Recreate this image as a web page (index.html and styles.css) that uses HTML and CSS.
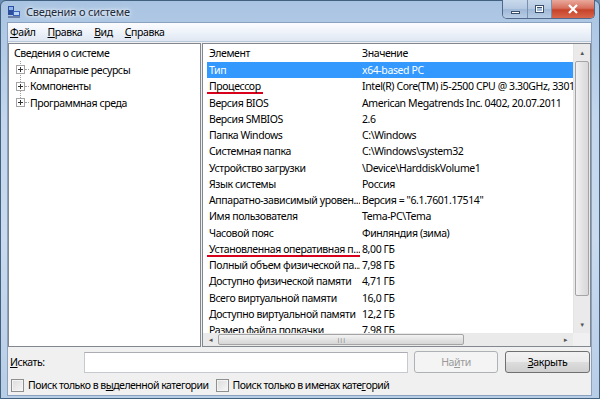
FILE: index.html
```html
<!DOCTYPE html>
<html lang="ru">
<head>
<meta charset="utf-8">
<link rel="stylesheet" href="styles.css">
</head>
<body>
<div class="window">
  <div class="titlebar">
    <svg class="appicon" width="14" height="14" viewBox="0 0 14 14">
      <rect x="1" y="1" width="6" height="9" fill="#2b4f9e"/>
      <rect x="2" y="2" width="4" height="3" fill="#8fb4ea"/>
      <rect x="6" y="6" width="7" height="6" fill="#3a62b8"/>
      <rect x="7" y="7" width="5" height="3" fill="#b9d2f5"/>
      <rect x="1" y="11" width="12" height="2" fill="#6b7fa6"/>
    </svg>
    <span class="title">Сведения о системе</span>
    <div class="capbtns">
      <div class="cap cap-min"><span class="minbar"></span></div>
      <div class="cap cap-max"><span class="maxbox"></span></div>
      <div class="cap cap-close">
        <svg width="12" height="10" viewBox="0 0 12 10"><path d="M2 1 L10 9 M10 1 L2 9" stroke="#fff" stroke-width="2.2"/></svg>
      </div>
    </div>
  </div>
  <div class="client">
    <div class="menubar">
      <span class="menu"><u>Ф</u>айл</span>
      <span class="menu"><u>П</u>равка</span>
      <span class="menu"><u>В</u>ид</span>
      <span class="menu"><u>С</u>правка</span>
    </div>
    <div class="panes">
      <div class="tree">
        <div class="tnode root">Сведения о системе</div>
        <div class="tnode child"><span class="plus"></span><span class="dots"></span>Аппаратные ресурсы</div>
        <div class="tnode child"><span class="plus"></span><span class="dots"></span>Компоненты</div>
        <div class="tnode child"><span class="plus"></span><span class="dots"></span>Программная среда</div>
        <div class="vline"></div>
      </div>
      <div class="list">
        <div class="listmain">
          <div class="listbody">
            <div class="row head"><span class="c1">Элемент</span><span class="c2">Значение</span></div>
            <div class="row sel"><span class="c1">Тип</span><span class="c2">x64-based PC</span></div>
            <div class="row"><span class="c1"><span class="mark">Процессор</span></span><span class="c2">Intel(R) Core(TM) i5-2500 CPU @ 3.30GHz, 3301</span></div>
            <div class="row"><span class="c1">Версия BIOS</span><span class="c2">American Megatrends Inc. 0402, 20.07.2011</span></div>
            <div class="row"><span class="c1">Версия SMBIOS</span><span class="c2">2.6</span></div>
            <div class="row"><span class="c1">Папка Windows</span><span class="c2">C:\Windows</span></div>
            <div class="row"><span class="c1">Системная папка</span><span class="c2">C:\Windows\system32</span></div>
            <div class="row"><span class="c1">Устройство загрузки</span><span class="c2">\Device\HarddiskVolume1</span></div>
            <div class="row"><span class="c1">Язык системы</span><span class="c2">Россия</span></div>
            <div class="row"><span class="c1">Аппаратно-зависимый уровен...</span><span class="c2">Версия = "6.1.7601.17514"</span></div>
            <div class="row"><span class="c1">Имя пользователя</span><span class="c2">Tema-PC\Tema</span></div>
            <div class="row"><span class="c1">Часовой пояс</span><span class="c2">Финляндия (зима)</span></div>
            <div class="row"><span class="c1"><span class="mark">Установленная оперативная п...</span></span><span class="c2">8,00 ГБ</span></div>
            <div class="row"><span class="c1">Полный объем физической па...</span><span class="c2">7,98 ГБ</span></div>
            <div class="row"><span class="c1">Доступно физической памяти</span><span class="c2">4,71 ГБ</span></div>
            <div class="row"><span class="c1">Всего виртуальной памяти</span><span class="c2">16,0 ГБ</span></div>
            <div class="row"><span class="c1">Доступно виртуальной памяти</span><span class="c2">12,2 ГБ</span></div>
            <div class="row"><span class="c1">Размер файла подкачки</span><span class="c2">7,98 ГБ</span></div>
          </div>
          <div class="vscroll">
            <div class="sarrow up">▲</div>
            <div class="vtrack"><div class="vthumb"></div></div>
            <div class="sarrow down">▼</div>
          </div>
        </div>
        <div class="hscroll">
          <div class="harrow">◄</div>
          <div class="htrack"><div class="hthumb"><span class="grip">|||</span></div></div>
          <div class="harrow">►</div>
          <div class="corner"></div>
        </div>
      </div>
    </div>
    <div class="search">
      <label class="slabel"><u>И</u>скать:</label>
      <div class="sinput"></div>
      <button class="btn disabled">На<u>й</u>ти</button>
      <button class="btn close"><u>З</u>акрыть</button>
    </div>
    <div class="checks">
      <span class="chk"><span class="box"></span>Поиск только в в<u>ы</u>деленной категории</span>
      <span class="chk"><span class="box"></span>Поиск только в именах кате<u>г</u>орий</span>
    </div>
  </div>
</div>
</body>
</html>
```
FILE: styles.css
```css
* { box-sizing: border-box; }
html, body { margin: 0; padding: 0; }
body {
  width: 600px; height: 399px; overflow: hidden;
  font-family: "Noto Sans", "Open Sans", sans-serif;
  font-size: 10.5px; letter-spacing: -0.4px; color: #000;
  background: #6e8fb4;
}
.window {
  width: 600px; height: 399px;
  display: flex; flex-direction: column;
  border-radius: 6px 6px 0 0;
  background: linear-gradient(180deg, #a9c4e2 0%, #c3d6ec 30%, #c9daee 60%, #b8cde6 100%);
  border: 1px solid #42607f;
  padding: 0 7px 6px 6px;
}
.titlebar {
  height: 21px; flex: none;
  display: flex; align-items: center;
  position: relative;
}
.appicon { margin: 1px 5px 0 0; }
.title { font-size: 11px; letter-spacing: -0.2px; color: #1e2b3c; text-shadow: 0 0 6px #fff, 0 0 3px #fff; }
.capbtns {
  margin-left: auto; align-self: flex-start;
  display: flex; margin-right: -3px; margin-top: -1px;
  border: 1px solid #52688a; border-top: none;
  border-radius: 0 0 5px 5px; overflow: hidden;
  height: 19px;
}
.cap { height: 18px; display: flex; align-items: center; justify-content: center; }
.cap-min, .cap-max {
  width: 25px;
  background: linear-gradient(180deg, #c9d9ec 0%, #b3c8e1 50%, #9fb8d6 51%, #b8cde6 100%);
  border-right: 1px solid #7890b0;
}
.cap-max { width: 24px; }
.minbar { width: 9px; height: 3px; background: #fff; border: 1px solid #3c4f6a; margin-top: 6px; }
.maxbox { width: 9px; height: 8px; border: 1px solid #3c4f6a; border-top-width: 3px; background: transparent; outline: 1px solid #fff; outline-offset: -2px; }
.cap-close {
  width: 42px;
  background: linear-gradient(180deg, #e9a99c 0%, #d7705e 45%, #c7432b 55%, #d8664a 100%);
}
.client {
  flex: 1; display: flex; flex-direction: column; min-width: 0;
  background: #f0f0f0;
  border: 1px solid #8aa2bf;
}
.menubar {
  height: 19px; flex: none;
  display: flex; align-items: center;
  padding-left: 2px;
  background: linear-gradient(180deg, #fbfcfe 0%, #eef3fa 50%, #dfe7f2 100%);
  border-bottom: 1px solid #b9c9dc;
}
.menu { margin-right: 12px; }
.panes {
  height: 305px; flex: none;
  display: flex; gap: 1px;
  padding: 1px 0 0 0; min-width: 0;
}
.tree {
  width: 193px; flex: none; position: relative;
  background: #fff; border: 1px solid #828790;
  padding: 1px 0 0 5px;
}
.tnode { height: 16.5px; line-height: 16.5px; white-space: nowrap; display: flex; align-items: center; position: relative; z-index: 1; }
.child { padding-left: 2px; }
.plus {
  width: 9px; height: 9px; border: 1px solid #a4a4a4; background: #fff;
  position: relative; flex: none;
}
.plus::before { content: ""; position: absolute; left: 1px; top: 3px; width: 5px; height: 1px; background: #333; }
.plus::after { content: ""; position: absolute; left: 3px; top: 1px; width: 1px; height: 5px; background: #333; }
.dots { width: 4px; border-top: 1px dotted #a0a0a0; margin-right: 1px; flex: none; }
.vline { position: absolute; left: 11px; top: 17px; height: 43px; border-left: 1px dotted #a0a0a0; z-index: 0; }
.list {
  flex: 1; min-width: 0; display: flex; flex-direction: column;
  background: #fff; border: 1px solid #828790;
}
.listmain { flex: 1; display: flex; min-height: 0; min-width: 0; }
.listbody { flex: 1; min-width: 0; overflow: hidden; padding-left: 4px; }
.row { display: flex; height: 16.25px; line-height: 16.25px; white-space: nowrap; }
.row.head { height: 18px; line-height: 18px; }
.row.sel { background: #3399ff; color: #fff; }
.c1 { width: 153px; flex: none; padding-left: 2px; overflow: hidden; }
.c2 { flex: 1; padding-left: 2px; overflow: hidden; }
.mark {
  display: inline-block; line-height: 12px;
  border-bottom: 2px solid #d9001b;
  margin-left: -2px; padding: 0 2px 0 2px;
}
.vscroll {
  width: 17px; flex: none; display: flex; flex-direction: column;
  background: #eaeaea; border-left: 1px solid #e3e3e3;
}
.sarrow { height: 17px; font-size: 6px; color: #555; display: flex; align-items: center; justify-content: center; }
.vtrack { flex: 1; padding: 0 1px; }
.vthumb {
  height: 235px; border: 1px solid #a4a4a4; border-radius: 2px;
  background: linear-gradient(90deg, #f3f3f3, #e3e3e3 50%, #d8d8d8);
}
.hscroll { height: 13px; flex: none; display: flex; background: #eaeaea; }
.harrow { width: 15px; font-size: 6px; color: #555; display: flex; align-items: center; justify-content: center; }
.htrack { flex: 1; padding: 1px 0; }
.hthumb {
  width: 246px; height: 100%; border: 1px solid #a4a4a4; border-radius: 2px;
  background: linear-gradient(180deg, #f3f3f3, #e3e3e3 50%, #d6d6d6);
  display: flex; align-items: center; justify-content: center;
  font-size: 6px; color: #666;
}
.corner { width: 17px; background: #f0f0f0; }
.search {
  display: flex; align-items: center;
  height: 26px; margin-top: 2px; padding-left: 2px;
}
.slabel { width: 74px; flex: none; }
.sinput {
  width: 324px; height: 21px; flex: none;
  background: #fff; border: 1px solid #c5c9d0; border-top-color: #abadb3;
}
.btn {
  font: inherit; letter-spacing: inherit;
  height: 22px; width: 84px; margin-left: 6px;
  border: 1px solid #707070; border-radius: 3px;
  background: linear-gradient(180deg, #f2f2f2 0%, #ebebeb 50%, #dddddd 51%, #cfcfcf 100%);
  color: #000; padding: 0;
}
.btn.close { width: 85px; margin-left: 7px; }
.btn.disabled { color: #9a9a9a; background: #f4f4f4; border-color: #adb2b5; }
.checks { display: flex; align-items: center; height: 20px; padding-left: 3px; letter-spacing: -0.5px; }
.chk { display: flex; align-items: center; white-space: nowrap; }
.chk + .chk { margin-left: 7px; }
.box {
  width: 13px; height: 13px; margin-right: 4px; flex: none;
  border: 1px solid #8e8f8f;
  background: linear-gradient(135deg, #dcdcdc, #f6f6f6);
  box-shadow: inset 0 0 0 1px #f4f4f4;
}
```
